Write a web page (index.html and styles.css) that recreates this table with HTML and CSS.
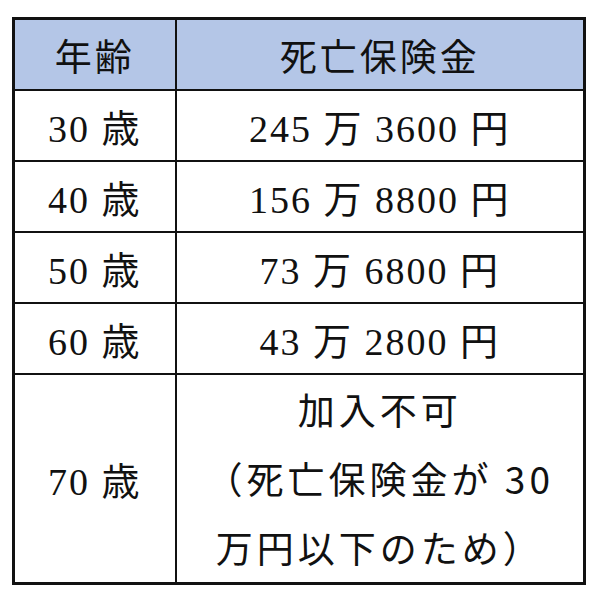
FILE: index.html
```html
<!DOCTYPE html>
<html lang="ja">
<head>
<meta charset="utf-8">
<link rel="stylesheet" href="styles.css">
</head>
<body>
<table class="rates">
  <colgroup><col class="c-age"><col class="c-amount"></colgroup>
  <thead>
    <tr class="head"><th>年齢</th><th>死亡保険金</th></tr>
  </thead>
  <tbody>
    <tr class="row"><td>30 歳</td><td>245 万 3600 円</td></tr>
    <tr class="row"><td>40 歳</td><td>156 万 8800 円</td></tr>
    <tr class="row"><td>50 歳</td><td>73 万 6800 円</td></tr>
    <tr class="row"><td>60 歳</td><td>43 万 2800 円</td></tr>
    <tr class="last"><td>70 歳</td><td class="note">加入不可<br>（死亡保険金が 30<br>万円以下のため）</td></tr>
  </tbody>
</table>
</body>
</html>
```
FILE: styles.css
```css
html, body {
  margin: 0;
  padding: 0;
  background: #fff;
}
body {
  padding: 17px 0 0 12px;
}
.rates {
  border-collapse: collapse;
  width: 571px;
  table-layout: fixed;
  font-family: "Liberation Serif", "Noto Sans CJK JP", serif;
  font-size: 38px;
  color: #111;
  border: 3px solid #111;
}
.c-age { width: 162px; }
.c-amount { width: 409px; }
.rates th, .rates td {
  border: 2px solid #111;
  text-align: center;
  vertical-align: middle;
  padding: 0;
  font-weight: 400;
  letter-spacing: 2px;
}
.head th {
  background: #b4c6e7;
  font-family: "Noto Sans CJK JP", sans-serif;
  font-size: 37px;
  height: 69px;
  letter-spacing: 3px;
}
.row td {
  height: 69px;
}
.last td {
  height: 207px;
}
.last .note {
  font-family: "Noto Sans CJK JP", sans-serif;
  font-size: 37px;
  line-height: 69px;
  letter-spacing: 4px;
}
```
